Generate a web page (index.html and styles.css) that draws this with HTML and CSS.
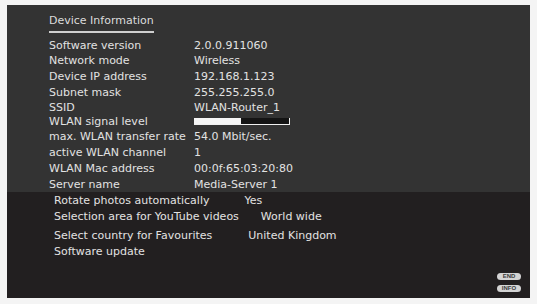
FILE: index.html
```html
<!DOCTYPE html>
<html>
<head>
<meta charset="utf-8">
<link rel="stylesheet" href="styles.css">
</head>
<body>
<div class="screen">
  <section class="info">
    <div class="title">Device Information</div>
    <div class="rows">
      <div class="row r15"><span class="label">Software version</span><span class="value">2.0.0.911060</span></div>
      <div class="row r15"><span class="label">Network mode</span><span class="value">Wireless</span></div>
      <div class="row r16"><span class="label">Device IP address</span><span class="value">192.168.1.123</span></div>
      <div class="row r16"><span class="label">Subnet mask</span><span class="value">255.255.255.0</span></div>
      <div class="row r14"><span class="label">SSID</span><span class="value">WLAN-Router_1</span></div>
      <div class="row r14"><span class="label">WLAN signal level</span><span class="value"><span class="signal"><span class="signal-fill"></span></span></span></div>
      <div class="row r16"><span class="label">max. WLAN transfer rate</span><span class="value">54.0 Mbit/sec.</span></div>
      <div class="row r16"><span class="label">active WLAN channel</span><span class="value">1</span></div>
      <div class="row r16"><span class="label">WLAN Mac address</span><span class="value">00:0f:65:03:20:80</span></div>
      <div class="row r16"><span class="label">Server name</span><span class="value">Media-Server 1</span></div>
    </div>
  </section>
  <section class="settings">
    <div class="srow s1"><span class="slabel">Rotate photos automatically</span><span class="svalue">Yes</span></div>
    <div class="srow s2"><span class="slabel">Selection area for YouTube videos</span><span class="svalue">World wide</span></div>
    <div class="srow s3"><span class="slabel">Select country for Favourites</span><span class="svalue">United Kingdom</span></div>
    <div class="srow s4"><span class="slabel">Software update</span></div>
    <div class="keys">
      <span class="key">END</span>
      <span class="key">INFO</span>
    </div>
  </section>
</div>
</body>
</html>
```
FILE: styles.css
```css
html, body {
  margin: 0;
  padding: 0;
  background: #f4f4f4;
}
body {
  width: 537px;
  height: 304px;
  overflow: hidden;
  font-family: "DejaVu Sans", "Liberation Sans", sans-serif;
  font-size: 11px;
  color: #e2e2e2;
}
.screen {
  margin: 5px 0 0 7px;
  width: 523px;
  height: 293px;
  display: flex;
  flex-direction: column;
}
.info {
  background: #333333;
  height: 187px;
  padding: 9px 0 0 42px;
  box-sizing: border-box;
}
.title {
  display: inline-block;
  line-height: 14px;
  padding-bottom: 3px;
  border-bottom: 2px solid #cfcfcf;
  color: #dcdcdc;
}
.rows {
  margin-top: 5px;
}
.row {
  display: flex;
  align-items: center;
}
.r15 { height: 15px; }
.r16 { height: 16px; }
.r14 { height: 14px; }
.label {
  width: 145px;
  white-space: nowrap;
}
.value {
  display: flex;
  align-items: center;
  white-space: nowrap;
}
.signal {
  display: block;
  width: 95px;
  height: 6px;
  background: #141414;
  border-right: 1px solid #f0f0f0;
  border-bottom: 1px solid #f0f0f0;
}
.signal-fill {
  display: block;
  width: 47px;
  height: 6px;
  background: #f5f5f5;
}
.settings {
  flex: 1;
  background: #221f20;
  padding: 0 0 0 47px;
  position: relative;
}
.srow {
  display: flex;
  align-items: center;
  height: 16px;
  white-space: nowrap;
}
.s3 { margin-top: 3px; }
.s1 .svalue { margin-left: 35px; }
.s2 .svalue { margin-left: 22px; }
.s3 .svalue { margin-left: 36px; }
.keys {
  position: absolute;
  right: 9px;
  bottom: 6px;
  display: flex;
  flex-direction: column;
  gap: 5px;
}
.key {
  display: block;
  width: 24px;
  height: 7px;
  border-radius: 4px;
  background: #d4d4d4;
  color: #3a3a3a;
  font-family: "Liberation Sans", sans-serif;
  font-size: 6px;
  line-height: 7px;
  font-weight: bold;
  text-align: center;
}
```
